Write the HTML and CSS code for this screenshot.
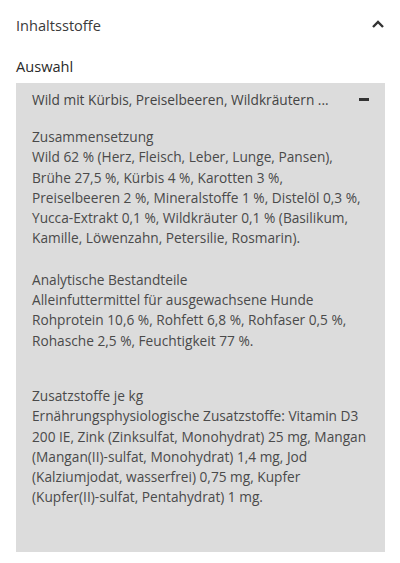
FILE: index.html
```html
<!DOCTYPE html>
<html lang="de">
<head>
<meta charset="utf-8">
<link rel="stylesheet" href="styles.css">
</head>
<body>
<div class="page">
  <div class="section-head">
    <span class="section-title">Inhaltsstoffe</span>
    <svg class="chevron" width="14" height="10" viewBox="0 0 14 10"><path d="M2 8 L7 3 L12 8" fill="none" stroke="#333" stroke-width="2.4"/></svg>
  </div>
  <div class="label">Auswahl</div>
  <div class="panel">
    <div class="panel-head">
      <span class="panel-title">Wild mit Kürbis, Preiselbeeren, Wildkräutern ...</span>
      <span class="minus"></span>
    </div>
    <div class="panel-body">
      <p>Zusammensetzung<br>Wild 62 % (Herz, Fleisch, Leber, Lunge, Pansen), Brühe 27,5 %, Kürbis 4 %, Karotten 3 %, Preiselbeeren 2 %, Mineralstoffe 1 %, Distelöl 0,3 %, Yucca-Extrakt 0,1 %, Wildkräuter 0,1 % (Basilikum, Kamille, Löwenzahn, Petersilie, Rosmarin).</p>
      <p>Analytische Bestandteile<br>Alleinfuttermittel für ausgewachsene Hunde<br>Rohprotein 10,6 %, Rohfett 6,8 %, Rohfaser 0,5 %, Rohasche 2,5 %, Feuchtigkeit 77 %.</p>
      <p class="gap">Zusatzstoffe je kg<br>Ernährungsphysiologische Zusatzstoffe: Vitamin D3 200 IE, Zink (Zinksulfat, Monohydrat) 25 mg, Mangan (Mangan(II)-sulfat, Monohydrat) 1,4 mg, Jod (Kalziumjodat, wasserfrei) 0,75 mg, Kupfer (Kupfer(II)-sulfat, Pentahydrat) 1 mg.</p>
    </div>
  </div>
</div>
</body>
</html>
```
FILE: styles.css
```css
html, body { margin: 0; padding: 0; background: #fff; }
body { font-family: "Open Sans", "Noto Sans", sans-serif; color: #333; }
.page { padding: 14px 15px 0 16px; }
.section-head { display: flex; justify-content: space-between; align-items: center; height: 22px; }
.section-title { font-size: 14.6px; color: #3a3a3a; }
.chevron { margin-top: -2px; }
.label { font-size: 14.6px; color: #2a2a2a; margin-top: 20px; line-height: 20px; }
.panel { background: #dcdcdc; margin-top: 7px; padding: 6px 14px 36px 16px; height: 427px; }
.panel-head { display: flex; justify-content: space-between; align-items: center; height: 20px; padding-right: 6px; }
.panel-title { font-size: 13.7px; color: #444; }
.minus { width: 10px; height: 3px; background: #333; margin-right: -4px; }
.panel-body { margin-top: 18px; font-size: 13.7px; line-height: 20.3px; color: #4a4a4a; }
.panel-body p { margin: 0 0 21px; }
.panel-body p.gap { margin-top: 35px; }
```
